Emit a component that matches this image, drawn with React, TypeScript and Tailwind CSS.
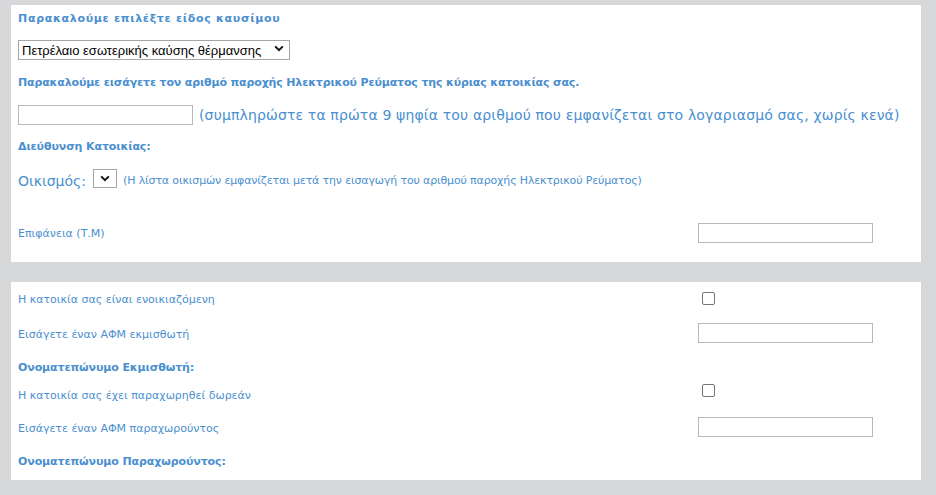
import React from "react";

const F = { fontFamily: '"DejaVu Sans", Verdana, sans-serif' };

function Chevron({ className = "" }: { className?: string }) {
  return (
    <svg className={className} width="10" height="7" viewBox="0 0 10 7" fill="none">
      <path d="M1.2 1.4 L5 5.2 L8.8 1.4" stroke="#111" strokeWidth="2" />
    </svg>
  );
}

function TextBox() {
  return <input type="text" className="w-[175px] h-[20px] border border-[#b8b8b8] bg-white outline-none" />;
}

function Check() {
  return (
    <input
      type="checkbox"
      className="appearance-none w-[13px] h-[13px] ml-[4px] border border-[#767676] rounded-[2px] bg-white"
    />
  );
}

export default function App() {
  const blue = "text-[#4a8fcf]";
  return (
    <div className="w-[936px] h-[495px] bg-[#d7d8da] pt-[5px] pl-[11px] pr-[15px]" style={F}>
      <div className="bg-white h-[257px] px-[7px]">
        <div className={`h-[26px] pt-[2px] flex items-center text-[11px] font-bold tracking-[0.7px] ${blue}`}>
          Παρακαλούμε επιλέξτε είδος καυσίμου
        </div>
        <div className="h-[37px] flex items-center">
          <div className="relative">
            <select
              className="appearance-none w-[272px] h-[20px] border border-[#a6a6a6] bg-white pl-[3px] text-[13px] text-black outline-none"
              style={{ fontFamily: '"Liberation Sans", Arial, sans-serif' }}
            >
              <option>Πετρέλαιο εσωτερικής καύσης θέρμανσης</option>
            </select>
            <Chevron className="absolute right-[6px] top-[7px] pointer-events-none" />
          </div>
        </div>
        <div className={`h-[30px] flex items-center text-[11px] font-bold tracking-[-0.15px] ${blue}`}>
          Παρακαλούμε εισάγετε τον αριθμό παροχής Ηλεκτρικού Ρεύματος της κύριας κατοικίας σας.
        </div>
        <div className="h-[34px] flex items-center gap-[6px]">
          <TextBox />
          <span className={`text-[14px] tracking-[0.15px] whitespace-nowrap ${blue}`}>
            (συμπληρώστε τα πρώτα 9 ψηφία του αριθμού που εμφανίζεται στο λογαριασμό σας, χωρίς κενά)
          </span>
        </div>
        <div className={`h-[30px] flex items-center text-[11px] font-bold tracking-[-0.1px] ${blue}`}>Διεύθυνση Κατοικίας:</div>
        <div className="h-[38px] flex items-center">
          <span className={`text-[14px] ${blue}`}>Οικισμός:</span>
          <div className="relative ml-[7px]">
            <select className="appearance-none w-[24px] h-[19px] border border-[#a6a6a6] bg-white outline-none" />
            <Chevron className="absolute left-[7px] top-[6px] pointer-events-none" />
          </div>
          <span className={`ml-[6px] text-[11px] tracking-[-0.15px] ${blue}`}>
            (Η λίστα οικισμών εμφανίζεται μετά την εισαγωγή του αριθμού παροχής Ηλεκτρικού Ρεύματος)
          </span>
        </div>
        <div className="h-[13px]" />
        <div className="h-[39px] flex items-center">
          <span className={`w-[680px] text-[11px] pt-[4px] ${blue}`}>Επιφάνεια (Τ.Μ)</span>
          <TextBox />
        </div>
      </div>

      <div className="bg-white h-[198px] mt-[20px] px-[7px]">
        <div className="h-[32px] flex items-center">
          <span className={`w-[680px] text-[11px] pt-[5px] ${blue}`}>Η κατοικία σας είναι ενοικιαζόμενη</span>
          <Check />
        </div>
        <div className="h-[38px] flex items-center">
          <span className={`w-[680px] text-[11px] pt-[4px] ${blue}`}>Εισάγετε έναν ΑΦΜ εκμισθωτή</span>
          <TextBox />
        </div>
        <div className={`h-[30px] pt-[2px] flex items-center text-[11px] font-bold tracking-[-0.1px] ${blue}`}>Ονοματεπώνυμο Εκμισθωτή:</div>
        <div className="h-[24px] flex items-center">
          <span className={`w-[680px] text-[11px] pt-[4px] ${blue}`}>Η κατοικία σας έχει παραχωρηθεί δωρεάν</span>
          <span className="-mt-[5px]"><Check /></span>
        </div>
        <div className="h-[42px] flex items-center">
          <span className={`w-[680px] text-[11px] pt-[4px] ${blue}`}>Εισάγετε έναν ΑΦΜ παραχωρούντος</span>
          <TextBox />
        </div>
        <div className={`h-[28px] pt-[1px] flex items-center text-[11px] font-bold tracking-[-0.1px] ${blue}`}>Ονοματεπώνυμο Παραχωρούντος:</div>
      </div>
    </div>
  );
}
